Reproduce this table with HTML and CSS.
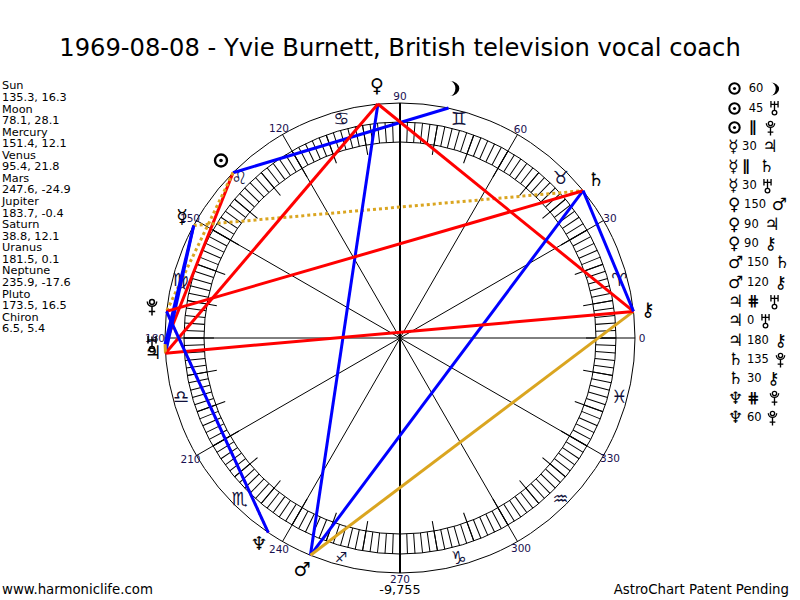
FILE: index.html
```html
<!DOCTYPE html>
<html lang="en">
<head>
<meta charset="utf-8">
<title>1969-08-08 - Yvie Burnett</title>
<link rel="stylesheet" href="styles.css">
</head>
<body>
<h1 class="title">1969-08-08 - Yvie Burnett, British television vocal coach</h1>
<div class="main">
  <div class="positions">
    <div>Sun</div><div>135.3, 16.3</div>
    <div>Moon</div><div>78.1, 28.1</div>
    <div>Mercury</div><div>151.4, 12.1</div>
    <div>Venus</div><div>95.4, 21.8</div>
    <div>Mars</div><div>247.6, -24.9</div>
    <div>Jupiter</div><div>183.7, -0.4</div>
    <div>Saturn</div><div>38.8, 12.1</div>
    <div>Uranus</div><div>181.5, 0.1</div>
    <div>Neptune</div><div>235.9, -17.6</div>
    <div>Pluto</div><div>173.5, 16.5</div>
    <div>Chiron</div><div>6.5, 5.4</div>
  </div>
  <svg class="chart" viewBox="140 70 520 514" width="520" height="514" xmlns="http://www.w3.org/2000/svg">
    <defs>
      <symbol id="pluto" viewBox="0 0 12 18">
        <g fill="none" stroke="#000" stroke-width="1.5">
          <circle cx="6" cy="4" r="2.4"/>
          <path d="M1.3 3.6 A4.7 4.7 0 0 0 10.7 3.6"/>
          <path d="M6 8.4 V17.5 M2.8 13.6 H9.2"/>
        </g>
      </symbol>
      <symbol id="uranus" viewBox="0 0 12 18">
        <g fill="none" stroke="#000" stroke-width="1.5">
          <path d="M2 1 V8.5 M10 1 V8.5 M2 5 H10 M6 1.5 V11.5"/>
          <circle cx="6" cy="14.2" r="2.6"/>
        </g>
      </symbol>
      <symbol id="moon" viewBox="0 0 12 16">
        <path d="M2 1 A9 7 0 0 1 2 15 A5.3 7 0 0 0 2 1 Z" fill="#000"/>
      </symbol>
      <symbol id="sun" viewBox="0 0 14 14">
        <circle cx="7" cy="7" r="5.6" fill="none" stroke="#000" stroke-width="2.2"/>
        <circle cx="7" cy="7" r="1.7" fill="#000"/>
      </symbol>
    </defs>
    <g class="rings">
      <circle cx="400" cy="338" r="235"/>
      <circle cx="400" cy="338" r="216"/>
      <circle cx="400" cy="338" r="196"/>
      <circle class="hatch" cx="400" cy="338" r="206" pathLength="180"/>
      <circle class="ticks" cx="400" cy="338" r="201" pathLength="36"/>
    </g>
    <g class="spokes">
      <line x1="635" y1="338" x2="165" y2="338"/>
      <line x1="603.5" y1="220.5" x2="196.5" y2="455.5"/>
      <line x1="517.5" y1="134.5" x2="282.5" y2="541.5"/>
      <line class="axis" x1="400" y1="103" x2="400" y2="573"/>
      <line x1="282.5" y1="134.5" x2="517.5" y2="541.5"/>
      <line x1="196.5" y1="220.5" x2="603.5" y2="455.5"/>
    </g>
    <g class="deg">
      <text x="642" y="338">0</text>
      <text x="610" y="217.5">30</text>
      <text x="520.5" y="128.5">60</text>
      <text x="400" y="96">90</text>
      <text x="279" y="128">120</text>
      <text x="190" y="217.5">150</text>
      <text x="155" y="338">180</text>
      <text x="190.5" y="459">210</text>
      <text x="279" y="548.5">240</text>
      <text x="400" y="579">270</text>
      <text x="521" y="547.5">300</text>
      <text x="610" y="458">330</text>
    </g>
    <g class="sg">
      <text x="619.3" y="279.2">♈︎</text>
      <text x="560.5" y="177.5">♉︎</text>
      <text x="458.8" y="118.7">♊︎</text>
      <text x="341.2" y="118.7">♋︎</text>
      <text x="239.5" y="177.5">♌︎</text>
      <text x="180.7" y="279.2">♍︎</text>
      <text x="180.7" y="396.8">♎︎</text>
      <text x="239.5" y="498.5">♏︎</text>
      <text class="small" x="341.2" y="557.3">♐︎</text>
      <text x="458.8" y="557.3">♑︎</text>
      <text x="560.5" y="498.5">♒︎</text>
      <text x="619.3" y="396.8">♓︎</text>
    </g>
    <g class="asp">
      <line class="blue" x1="233.0" y1="172.7" x2="448.5" y2="108.0"/>
      <line class="red" x1="233.0" y1="172.7" x2="165.1" y2="344.2"/>
      <line class="gold-dot" x1="233.0" y1="172.7" x2="166.5" y2="311.4"/>
      <line class="blue" x1="193.7" y1="225.5" x2="165.5" y2="353.2"/>
      <line class="gold-dot" x1="193.7" y1="225.5" x2="583.1" y2="190.7"/>
      <line class="blue" x1="193.7" y1="225.5" x2="165.1" y2="344.2"/>
      <line class="blue" x1="377.9" y1="104.0" x2="310.4" y2="555.3"/>
      <line class="red" x1="377.9" y1="104.0" x2="165.5" y2="353.2"/>
      <line class="red" x1="377.9" y1="104.0" x2="633.5" y2="311.4"/>
      <line class="blue" x1="310.4" y1="555.3" x2="583.1" y2="190.7"/>
      <line class="gold" x1="310.4" y1="555.3" x2="633.5" y2="311.4"/>
      <line class="red-dot" x1="165.5" y1="353.2" x2="165.1" y2="344.2"/>
      <line class="gold" x1="165.5" y1="353.2" x2="165.1" y2="344.2"/>
      <line class="red" x1="165.5" y1="353.2" x2="633.5" y2="311.4"/>
      <line class="red" x1="583.1" y1="190.7" x2="166.5" y2="311.4"/>
      <line class="blue" x1="583.1" y1="190.7" x2="633.5" y2="311.4"/>
      <line class="red-dot" x1="268.3" y1="532.6" x2="166.5" y2="311.4"/>
      <line class="blue" x1="268.3" y1="532.6" x2="166.5" y2="311.4"/>
    </g>
    <g class="pl">
      <text x="182" y="216">☿</text>
      <text x="377" y="85">♀</text>
      <text x="302" y="569">♂</text>
      <text x="153" y="352">♃</text>
      <text x="596" y="179">♄</text>
      <text x="259" y="543">♆</text>
      <text x="648" y="309">⚷</text>
    </g>
    <use href="#sun" x="213" y="153" width="16" height="15"/>
    <use href="#moon" x="447" y="80" width="14" height="17"/>
    <use href="#uranus" x="146" y="335" width="12" height="18"/>
    <use href="#pluto" x="146" y="298" width="12" height="18"/>
  </svg>
  <div class="aspects">
    <div class="aspect"><svg class="gs wide"><use href="#sun"/></svg> <span class="n">60</span> <svg class="gi g2"><use href="#moon"/></svg></div>
    <div class="aspect"><svg class="gs wide"><use href="#sun"/></svg> <span class="n">45</span> <svg class="gi g2"><use href="#uranus"/></svg></div>
    <div class="aspect"><svg class="gs wide"><use href="#sun"/></svg> <b class="par">∥</b> &nbsp;<svg class="gi g2"><use href="#pluto"/></svg></div>
    <div class="aspect"><span class="g">☿</span> <span class="n">30</span> <span class="g g2">♃</span></div>
    <div class="aspect"><span class="g">☿</span> <b class="par">∥</b> &nbsp;<span class="g g2">♄</span></div>
    <div class="aspect"><span class="g">☿</span> <span class="n">30</span> <svg class="gi g2"><use href="#uranus"/></svg></div>
    <div class="aspect"><span class="g">♀</span> <span class="n">150</span> <span class="g g2">♂</span></div>
    <div class="aspect"><span class="g">♀</span> <span class="n">90</span> <span class="g g2">♃</span></div>
    <div class="aspect"><span class="g">♀</span> <span class="n">90</span> <span class="g g2">⚷</span></div>
    <div class="aspect"><span class="g">♂</span> <span class="n">150</span> <span class="g g2">♄</span></div>
    <div class="aspect"><span class="g">♂</span> <span class="n">120</span> <span class="g g2">⚷</span></div>
    <div class="aspect"><span class="g">♃</span> <b class="par">⋕</b> &nbsp;<svg class="gi g2"><use href="#uranus"/></svg></div>
    <div class="aspect"><span class="g">♃</span> <span class="n">0</span> <svg class="gi g2"><use href="#uranus"/></svg></div>
    <div class="aspect"><span class="g">♃</span> <span class="n">180</span> <span class="g g2">⚷</span></div>
    <div class="aspect"><span class="g">♄</span> <span class="n">135</span> <svg class="gi g2"><use href="#pluto"/></svg></div>
    <div class="aspect"><span class="g">♄</span> <span class="n">30</span> <span class="g g2">⚷</span></div>
    <div class="aspect"><span class="g">♆</span> <b class="par">⋕</b> &nbsp;<svg class="gi g2"><use href="#pluto"/></svg></div>
    <div class="aspect"><span class="g">♆</span> <span class="n">60</span> <svg class="gi g2"><use href="#pluto"/></svg></div>
  </div>
</div>
<div class="footer">
  <span class="site">www.harmoniclife.com</span>
  <span class="count">-9,755</span>
  <span class="patent">AstroChart Patent Pending</span>
</div>
</body>
</html>
```
FILE: styles.css
```css
* { box-sizing: border-box; }
html, body { margin: 0; padding: 0; }
body {
  width: 800px;
  height: 600px;
  overflow: hidden;
  background: #fff;
  color: #000;
  font-family: "DejaVu Sans", "Liberation Sans", sans-serif;
}
.title {
  margin: 0;
  height: 70px;
  padding-top: 34px;
  font-size: 24.2px;
  line-height: 28px;
  font-weight: normal;
  text-align: center;
  white-space: nowrap;
}
.main {
  display: grid;
  grid-template-columns: 140px 520px 140px;
  height: 514px;
}
.positions {
  padding: 10.4px 0 0 2px;
  font-size: 11.3px;
  line-height: 11.57px;
  white-space: nowrap;
}
.chart { display: block; overflow: visible; }
.rings circle { fill: none; stroke: #000; stroke-width: 1; }
.rings .hatch { stroke-width: 20; stroke-dasharray: 0.14 0.86; stroke-dashoffset: 0.07; }
.rings .ticks { stroke-width: 30; stroke-dasharray: 0.03 0.97; stroke-dashoffset: 0.015; }
.spokes line { stroke: #000; stroke-width: 1; }
.spokes .axis { stroke-width: 2; }
.deg text {
  font-family: "DejaVu Sans", sans-serif;
  font-size: 10.5px;
  fill: #1a1050;
  text-anchor: middle;
  dominant-baseline: central;
}
.sg text {
  font-family: "DejaVu Sans", sans-serif;
  font-size: 18px;
  fill: #10103a;
  text-anchor: middle;
  dominant-baseline: central;
}
.sg .small { font-size: 14px; }
.pl text {
  font-family: "DejaVu Sans", sans-serif;
  font-size: 19px;
  font-weight: bold;
  fill: #000;
  text-anchor: middle;
  dominant-baseline: central;
}
.asp line { stroke-width: 3; fill: none; }
.asp .blue { stroke: #0000ff; }
.asp .red { stroke: #ff0000; }
.asp .gold { stroke: #daa520; }
.asp .gold-dot { stroke: #daa520; stroke-dasharray: 3 3; }
.asp .red-dot { stroke: #ff0000; stroke-width: 2.5; stroke-dasharray: 2 3; }
.aspects {
  padding: 9.3px 0 0 68px;
  white-space: nowrap;
}
.aspect {
  height: 19.35px;
  line-height: 19.35px;
  font-size: 11.5px;
}
.aspect .g { font-size: 17px; font-weight: bold; vertical-align: middle; }
.aspect .wide { margin-right: 4px; }
.aspect .g2 { margin-left: 2px; }
.aspect .n { vertical-align: middle; }
.aspect .gi { width: 11px; height: 16px; vertical-align: middle; }
.aspect .gs { width: 13px; height: 13px; vertical-align: middle; }
.aspect .par { font-size: 15px; font-weight: bold; vertical-align: middle; }
.footer {
  display: grid;
  grid-template-columns: 1fr auto 1fr;
  height: 16px;
  font-size: 13.3px;
  line-height: 11px;
  white-space: nowrap;
}
.site { padding-left: 2px; }
.count { text-align: center; font-size: 12.8px; }
.patent { text-align: right; padding-right: 11px; }
```
